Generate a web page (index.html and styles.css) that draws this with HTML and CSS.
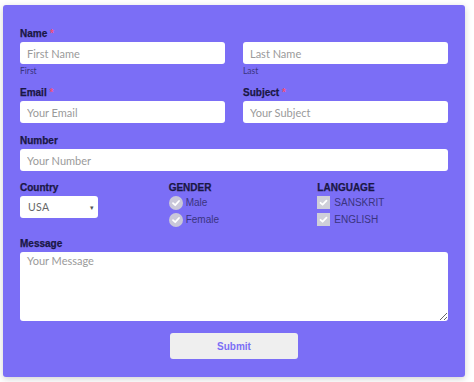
FILE: index.html
```html
<!DOCTYPE html>
<html>
<head>
<meta charset="utf-8">
<link rel="stylesheet" href="styles.css">
</head>
<body>
<form class="card">
  <div class="row two r-name">
    <div class="field">
      <div class="label">Name <span class="req">*</span></div>
      <input class="input" type="text" placeholder="First Name">
      <div class="sub">First</div>
    </div>
    <div class="field">
      <div class="label">&nbsp;</div>
      <input class="input" type="text" placeholder="Last Name">
      <div class="sub">Last</div>
    </div>
  </div>
  <div class="row two r-email">
    <div class="field">
      <div class="label">Email <span class="req">*</span></div>
      <input class="input" type="text" placeholder="Your Email">
    </div>
    <div class="field">
      <div class="label">Subject <span class="req">*</span></div>
      <input class="input" type="text" placeholder="Your Subject">
    </div>
  </div>
  <div class="row r-number">
    <div class="field">
      <div class="label">Number</div>
      <input class="input" type="text" placeholder="Your Number">
    </div>
  </div>
  <div class="row three r-choices">
    <div class="field">
      <div class="label">Country</div>
      <div class="select"><span>USA</span><span class="arrow">&#9662;</span></div>
    </div>
    <div class="field">
      <div class="label caps">GENDER</div>
      <div class="opt"><span class="radio"><svg viewBox="0 0 14 14" width="14" height="14"><circle cx="7" cy="7" r="7" fill="#c9c7d9"/><path d="M4 7.2 L6.2 9.2 L10 5" fill="none" stroke="#fff" stroke-width="1.8" stroke-linecap="round" stroke-linejoin="round"/></svg></span>Male</div>
      <div class="opt"><span class="radio"><svg viewBox="0 0 14 14" width="14" height="14"><circle cx="7" cy="7" r="7" fill="#c9c7d9"/><path d="M4 7.2 L6.2 9.2 L10 5" fill="none" stroke="#fff" stroke-width="1.8" stroke-linecap="round" stroke-linejoin="round"/></svg></span>Female</div>
    </div>
    <div class="field">
      <div class="label caps">LANGUAGE</div>
      <div class="opt"><span class="check"><svg viewBox="0 0 13 13" width="13" height="13"><rect width="13" height="13" fill="#cfcfd9"/><path d="M3.5 6.8 L5.6 8.7 L9.5 4.6" fill="none" stroke="#fff" stroke-width="1.8" stroke-linecap="round" stroke-linejoin="round"/></svg></span>SANSKRIT</div>
      <div class="opt"><span class="check"><svg viewBox="0 0 13 13" width="13" height="13"><rect width="13" height="13" fill="#cfcfd9"/><path d="M3.5 6.8 L5.6 8.7 L9.5 4.6" fill="none" stroke="#fff" stroke-width="1.8" stroke-linecap="round" stroke-linejoin="round"/></svg></span>ENGLISH</div>
    </div>
  </div>
  <div class="row r-message">
    <div class="field">
      <div class="label">Message</div>
      <textarea class="textarea" placeholder="Your Message"></textarea>
    </div>
  </div>
  <div class="actions">
    <button type="button" class="submit">Submit</button>
  </div>
</form>
</body>
</html>
```
FILE: styles.css
```css
html, body {
  margin: 0;
  padding: 0;
  background: #ffffff;
}
body {
  padding: 5px 9px 5px 3px;
  font-family: "Lato", "Liberation Sans", sans-serif;
}
.card {
  width: 462px;
  height: 372px;
  box-sizing: border-box;
  background: #7b6ef6;
  border-radius: 3px;
  box-shadow: 0 2px 7px rgba(0, 0, 0, 0.18);
  padding: 22px 17px 18px 17px;
  display: flex;
  flex-direction: column;
}
.row {
  display: grid;
  grid-template-columns: 1fr;
  column-gap: 18px;
}
.row.two { grid-template-columns: 1fr 1fr; }
.row.three { grid-template-columns: 1fr 1fr 1fr; }
.r-name { margin-bottom: 9px; }
.r-email { margin-bottom: 11px; }
.r-number { margin-bottom: 10px; }
.r-choices { margin-bottom: 9px; }
.r-message { margin-bottom: 12px; }
.field {
  display: flex;
  flex-direction: column;
  align-items: flex-start;
}
.label {
  font-family: "Liberation Sans", Arial, sans-serif;
  font-weight: 700;
  font-size: 10px;
  line-height: 13px;
  color: #1a1744;
  -webkit-text-stroke: 0.25px #1a1744;
  margin-bottom: 2px;
}
.label.caps { margin-bottom: 0; }
.req { color: #f0507a; -webkit-text-stroke: 0; }
.input {
  box-sizing: border-box;
  width: 100%;
  height: 22px;
  border: none;
  border-radius: 3px;
  background: #fff;
  padding: 0 7px;
  font-family: "Lato", sans-serif;
  font-size: 11px;
  color: #333;
  outline: none;
  margin: 0;
}
.input::placeholder, .textarea::placeholder {
  color: #9a9a9a;
  opacity: 1;
}
.sub {
  font-family: "Lato", sans-serif;
  font-size: 8.5px;
  line-height: 12px;
  margin-top: 1px;
  color: #3a3480;
}
.select {
  box-sizing: border-box;
  width: 78px;
  height: 22px;
  background: #fff;
  border-radius: 3px;
  display: flex;
  align-items: center;
  justify-content: space-between;
  padding: 0 4px 0 8px;
  font-family: "Lato", sans-serif;
  font-size: 10.5px;
  letter-spacing: 0.3px;
  color: #666;
}
.arrow {
  font-size: 7px;
  color: #555;
}
.opt {
  display: flex;
  align-items: center;
  height: 17px;
  font-family: "Liberation Sans", Arial, sans-serif;
  font-size: 10px;
  color: #3a3480;
}
.radio, .check {
  display: inline-flex;
  margin-right: 3px;
}
.check { margin-right: 4px; }
.textarea {
  box-sizing: border-box;
  width: 100%;
  height: 69px;
  border: none;
  border-radius: 3px;
  background: #fff;
  padding: 2px 7px;
  font-family: "Lato", sans-serif;
  font-size: 11px;
  outline: none;
  margin: 0;
  resize: both;
}
.actions {
  display: flex;
  justify-content: center;
}
.submit {
  width: 128px;
  height: 26px;
  border: none;
  border-radius: 3px;
  background: #efefef;
  color: #7b6ef6;
  font-family: "Liberation Sans", Arial, sans-serif;
  font-weight: 700;
  font-size: 10px;
  margin: 0;
  padding: 0;
}
```
